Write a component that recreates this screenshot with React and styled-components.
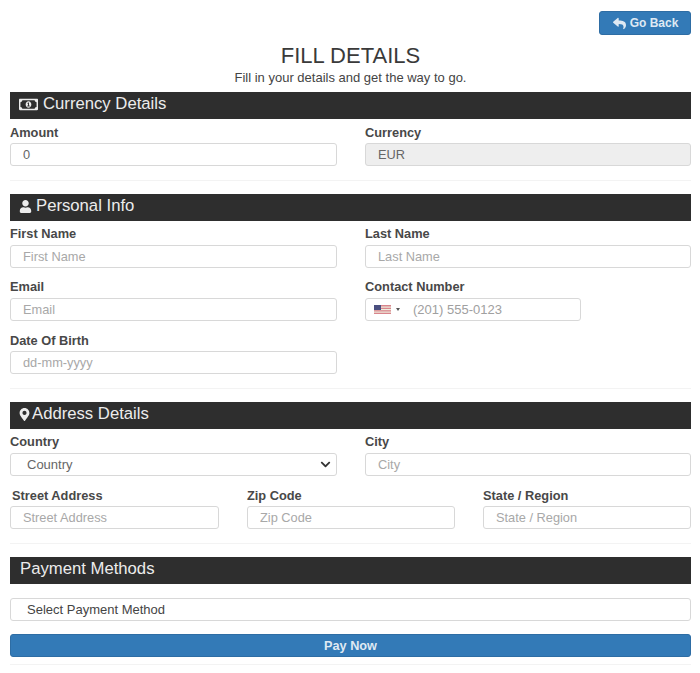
import React from "react";
import styled, { createGlobalStyle } from "styled-components";
import { FaRegMoneyBillAlt, FaUser, FaMapMarkerAlt, FaReply, FaChevronDown } from "react-icons/fa";

const Global = createGlobalStyle`
  html, body { margin: 0; padding: 0; background: #fff; }
  body { font-family: "Liberation Sans", Arial, sans-serif; color: #333; }
`;

const Page = styled.div`
  width: 700px;
  height: 673px;
  box-sizing: border-box;
  padding: 11px 9px 0 10px;
  overflow: hidden;
`;
const TopRow = styled.div`
  display: flex;
  justify-content: flex-end;
`;
const BackButton = styled.button`
  width: 92px;
  height: 24px;
  display: flex;
  align-items: center;
  justify-content: center;
  gap: 4px;
  padding: 0 0 0 1px;
  border: 1px solid #2e6da4;
  border-radius: 3px;
  background: #337ab7;
  color: #dfe9f3;
  font: bold 12px "Liberation Sans", Arial, sans-serif;
`;
const Title = styled.h1`
  margin: 10px 0 0;
  height: 21px;
  text-align: center;
  font-size: 22px;
  line-height: 21px;
  font-weight: 400;
  color: #3a3a3a;
`;
const Subtitle = styled.p`
  margin: 5px 0 0;
  height: 14px;
  text-align: center;
  font-size: 13px;
  line-height: 14px;
  color: #444;
`;
const Bar = styled.h2`
  box-sizing: border-box;
  margin: ${(p) => p.$top}px 0 0;
  height: 27px;
  display: flex;
  align-items: center;
  gap: ${(p) => p.$gap ?? 4}px;
  padding: 0 0 3px ${(p) => p.$left ?? 9}px;
  background: #2e2e2e;
  color: #ececec;
  font-size: 16.7px;
  font-weight: 400;
`;
const Columns = styled.div`
  display: grid;
  grid-template-columns: ${(p) => p.$cols};
  column-gap: 28px;
  margin-top: ${(p) => p.$top ?? 0}px;
`;
const Field = styled.div`
  display: flex;
  flex-direction: column;
`;
const Label = styled.label`
  height: 13px;
  margin-left: ${(p) => p.$indent ?? 0}px;
  margin-bottom: ${(p) => p.$gap ?? 4}px;
  font-size: 12.8px;
  line-height: 13px;
  font-weight: bold;
  color: #484848;
`;
const Input = styled.input`
  box-sizing: border-box;
  width: 100%;
  height: 23px;
  padding: 0 12px;
  border: 1px solid #d8d8d8;
  border-radius: 3px;
  background: ${(p) => (p.disabled ? "#eeeeee" : "#fff")};
  color: #666;
  font: 12.8px "Liberation Sans", Arial, sans-serif;
  &::placeholder { color: #a8a8a8; opacity: 1; }
  &:disabled { color: #666; -webkit-text-fill-color: #666; opacity: 1; }
`;
const SelectBox = styled.div`
  box-sizing: border-box;
  height: 23px;
  display: flex;
  align-items: center;
  justify-content: space-between;
  padding: 0 5px 1px 16px;
  border: 1px solid #d8d8d8;
  border-radius: 3px;
  background: #fff;
  color: ${(p) => p.$color};
  font-size: 13px;
`;
const PhoneBox = styled.div`
  box-sizing: border-box;
  width: 216px;
  height: 23px;
  display: flex;
  align-items: center;
  padding-left: 8px;
  border: 1px solid #d8d8d8;
  border-radius: 3px;
  color: #a0a0a0;
  font-size: 13px;
`;
const Caret = styled.span`
  width: 0;
  height: 0;
  margin: 0 13px 0 5px;
  border-left: 2.5px solid transparent;
  border-right: 2.5px solid transparent;
  border-top: 3px solid #555;
`;
const Rule = styled.hr`
  margin: ${(p) => p.$top ?? 14}px 0 0;
  border: 0;
  border-top: 1px solid #f3f3f3;
`;
const PayButton = styled.button`
  display: block;
  width: 100%;
  height: 23px;
  margin-top: 13px;
  padding: 0;
  border: 1px solid #2e6da4;
  border-radius: 3px;
  background: #337ab7;
  color: #dfe9f3;
  font: bold 12.7px "Liberation Sans", Arial, sans-serif;
`;

const Flag = () => (
  <svg width="17" height="9" viewBox="0 0 17 9" aria-hidden="true">
    <rect width="17" height="9" fill="#d9848c" />
    <rect y="1.5" width="17" height="1.2" fill="#eed" />
    <rect y="4" width="17" height="1.2" fill="#eed" />
    <rect y="6.5" width="17" height="1.2" fill="#eed" />
    <rect width="7" height="5" fill="#4a4f80" />
  </svg>
);

export default function App() {
  return (
    <Page>
      <Global />
      <TopRow>
        <BackButton><FaReply size={13} /> Go Back</BackButton>
      </TopRow>
      <Title>FILL DETAILS</Title>
      <Subtitle>Fill in your details and get the way to go.</Subtitle>

      <Bar $top={7} $gap={5}><FaRegMoneyBillAlt size={19} /> Currency Details</Bar>
      <Columns $cols="327px 326px" $top={7}>
        <Field><Label>Amount</Label><Input defaultValue="0" /></Field>
        <Field><Label>Currency</Label><Input defaultValue="EUR" disabled /></Field>
      </Columns>
      <Rule />

      <Bar $top={13}><FaUser size={13} /> Personal Info</Bar>
      <Columns $cols="327px 326px" $top={6}>
        <Field><Label $gap={5}>First Name</Label><Input placeholder="First Name" /></Field>
        <Field><Label $gap={5}>Last Name</Label><Input placeholder="Last Name" /></Field>
      </Columns>
      <Columns $cols="327px 326px" $top={12}>
        <Field><Label $gap={5}>Email</Label><Input placeholder="Email" /></Field>
        <Field>
          <Label $gap={5}>Contact Number</Label>
          <PhoneBox><Flag /><Caret />(201) 555-0123</PhoneBox>
        </Field>
      </Columns>
      <Columns $cols="327px 326px" $top={13}>
        <Field><Label>Date Of Birth</Label><Input placeholder="dd-mm-yyyy" /></Field>
      </Columns>
      <Rule />

      <Bar $top={13} $gap={1} $left={8}><FaMapMarkerAlt size={13} /> Address Details</Bar>
      <Columns $cols="327px 326px" $top={6}>
        <Field>
          <Label $gap={5}>Country</Label>
          <SelectBox $color="#666">Country <FaChevronDown size={11} color="#333" /></SelectBox>
        </Field>
        <Field><Label $gap={5}>City</Label><Input placeholder="City" /></Field>
      </Columns>
      <Columns $cols="209px 208px 208px" $top={13}>
        <Field><Label $indent={2}>Street Address</Label><Input placeholder="Street Address" /></Field>
        <Field><Label>Zip Code</Label><Input placeholder="Zip Code" /></Field>
        <Field><Label>State / Region</Label><Input placeholder="State / Region" /></Field>
      </Columns>
      <Rule />

      <Bar $top={13} $left={10}>Payment Methods</Bar>
      <Columns $cols="1fr" $top={14}>
        <SelectBox $color="#444">Select Payment Method</SelectBox>
      </Columns>
      <PayButton>Pay Now</PayButton>
      <Rule $top={7} />
    </Page>
  );
}
